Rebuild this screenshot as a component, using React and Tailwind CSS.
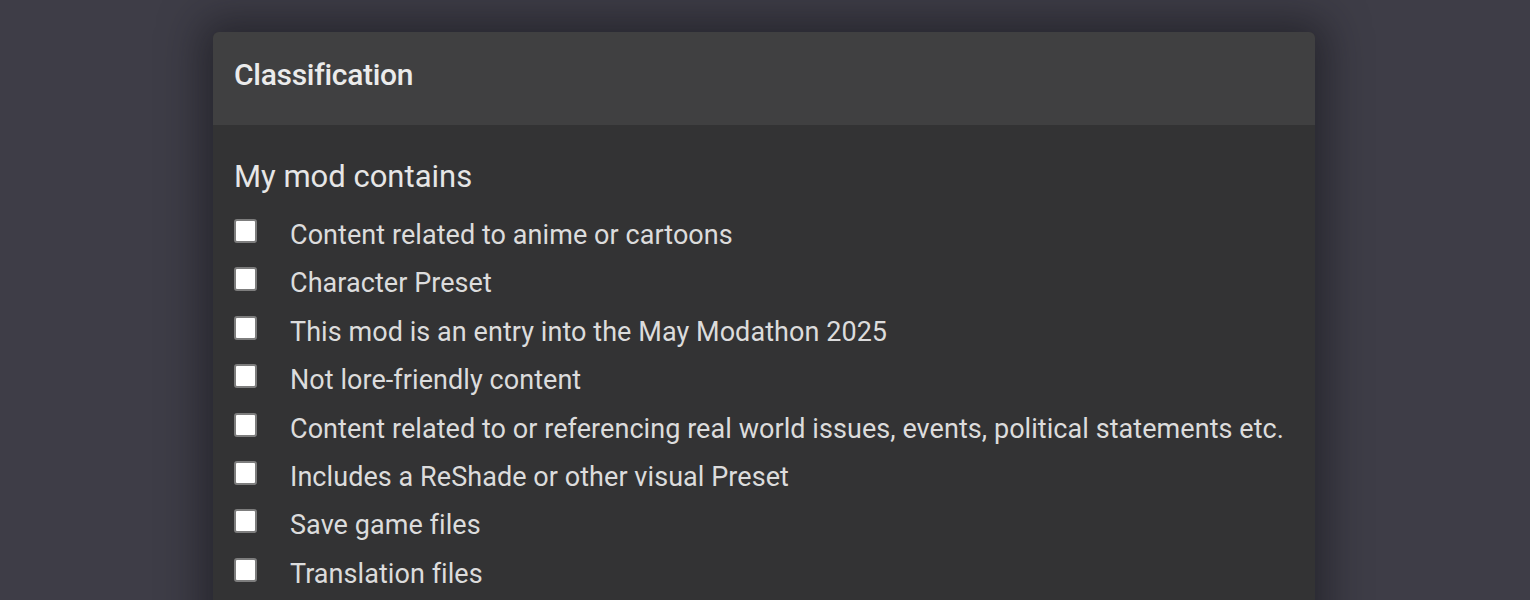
export default function App() {
  const items = [
    "Content related to anime or cartoons",
    "Character Preset",
    "This mod is an entry into the May Modathon 2025",
    "Not lore-friendly content",
    "Content related to or referencing real world issues, events, political statements etc.",
    "Includes a ReShade or other visual Preset",
    "Save game files",
    "Translation files",
  ];
  return (
    <div className="w-[1530px] h-[600px] overflow-hidden bg-[#3e3d47] pt-[32px] pl-[213px]" style={{ fontFamily: "Roboto, 'Liberation Sans', sans-serif" }}>
      <div className="w-[1102px] h-[700px] rounded-t-[6px] overflow-hidden bg-[#333334] shadow-[0_0_40px_12px_rgba(20,20,25,0.55)]">
        <div className="h-[93px] bg-[#404041] pl-[21px] pt-[25px]">
          <h2 className="text-[30px] leading-[36px] font-medium text-[#ebebeb] tracking-[-0.3px]">Classification</h2>
        </div>
        <div className="pl-[21px] pt-[32px]">
          <div className="text-[31px] text-[#e6e6e6] leading-[40px] mb-[22px]">My mod contains</div>
          <div className="flex flex-col">
            {items.map((t) => (
              <label key={t} className="flex items-start h-[48.4px]">
                <span className="mt-[0px] w-[23px] h-[24px] bg-white rounded-[3px] border-2 border-[#7d7d7d] shrink-0" />
                <span className="ml-[33px] text-[27px] leading-[32px] tracking-[0.06px] text-[#dcdcdc]">{t}</span>
              </label>
            ))}
          </div>
        </div>
      </div>
    </div>
  );
}
